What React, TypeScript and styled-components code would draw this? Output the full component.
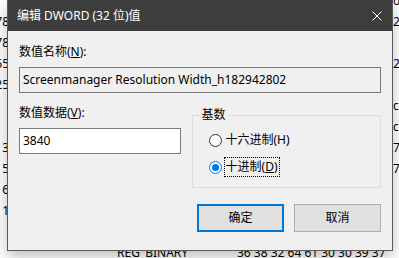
import React from "react";
import styled, { createGlobalStyle } from "styled-components";

const Global = createGlobalStyle`
  html, body { margin: 0; padding: 0; background: #fff; overflow: hidden; }
  body { font-family: "Noto Sans", "Noto Sans CJK SC", sans-serif; font-size: 12px; }
`;

const FONT = `"Noto Sans", "Noto Sans CJK SC", sans-serif`;

const Screen = styled.div`
  position: relative;
  width: 399px;
  height: 258px;
  overflow: hidden;
  background: #fff;
`;

const BgList = styled.div`
  margin-top: -10px;
  display: flex;
  flex-direction: column;
`;

const BgRow = styled.div`
  display: grid;
  grid-template-columns: 9px 108px 120px 156px 1fr;
  height: 21px;
  align-items: center;
  color: #000;
  white-space: nowrap;
  font-family: ${FONT};
  font-size: 12px;
`;

const BgCell = styled.span<{ $span?: number; $end?: boolean }>`
  overflow: hidden;
  display: flex;
  justify-content: ${(p) => (p.$end ? "flex-end" : "flex-start")};
  grid-column: span ${(p) => p.$span || 1};
`;

const Dialog = styled.div`
  position: absolute;
  left: 7px;
  top: 0;
  width: 386px;
  height: 251px;
  box-sizing: border-box;
  background: #f0f0f0;
  border: 1px solid #5a5a5a;
  border-top: none;
  box-shadow: 0 6px 14px rgba(0, 0, 0, 0.25);
  display: flex;
  flex-direction: column;
  font-family: ${FONT};
  font-size: 12px;
  color: #000;
`;

const TitleBar = styled.div`
  height: 31px;
  flex: none;
  background: #3d3d3d;
  color: #fff;
  display: flex;
  align-items: center;
  padding-left: 9px;
`;

const Title = styled.span`
  font-size: 12px;
  line-height: 16px;
`;

const CloseButton = styled.div`
  margin-left: auto;
  width: 31px;
  height: 31px;
  display: flex;
  align-items: center;
  justify-content: center;
`;

const Body = styled.div`
  display: flex;
  flex-direction: column;
  padding: 13px 11px 0 11px;
`;

const Label = styled.div`
  line-height: 16px;
  height: 16px;
  white-space: nowrap;
`;

const Key = styled.span`
  text-decoration: underline;
  text-underline-offset: 1px;
`;

const TextBox = styled.div<{ $readOnly?: boolean }>`
  margin-top: 7px;
  height: 26px;
  box-sizing: border-box;
  border: 1px solid #7a7a7a;
  background: ${(p) => (p.$readOnly ? "#f0f0f0" : "#fff")};
  padding: 0 3px;
  line-height: 24px;
  white-space: nowrap;
  overflow: hidden;
`;

const DataRow = styled.div`
  display: flex;
  gap: 11px;
  margin-top: 12px;
`;

const DataCol = styled.div`
  width: 162px;
  display: flex;
  flex-direction: column;
`;

const GroupBox = styled.div`
  position: relative;
  width: 190px;
  height: 73px;
  margin-top: 10px;
  box-sizing: border-box;
  border: 1px solid #dcdcdc;
  padding: 14px 0 0 16px;
  display: flex;
  flex-direction: column;
  gap: 7px;
`;

const Legend = styled.span`
  position: absolute;
  top: -9px;
  left: 7px;
  padding: 0 2px;
  background: #f0f0f0;
  line-height: 16px;
`;

const RadioRow = styled.div`
  display: flex;
  align-items: center;
  gap: 2px;
  height: 20px;
`;

const RadioCircle = styled.span<{ $checked?: boolean }>`
  width: 13px;
  height: 13px;
  box-sizing: border-box;
  border-radius: 50%;
  border: 1px solid ${(p) => (p.$checked ? "#0078d7" : "#333")};
  background: #fff;
  display: flex;
  align-items: center;
  justify-content: center;
  &::after {
    content: "";
    display: ${(p) => (p.$checked ? "block" : "none")};
    width: 7px;
    height: 7px;
    border-radius: 50%;
    background: #0078d7;
  }
`;

const RadioLabel = styled.span<{ $focused?: boolean }>`
  height: 20px;
  box-sizing: border-box;
  line-height: 18px;
  padding: 0 1px;
  border: 1px dotted ${(p) => (p.$focused ? "#000" : "transparent")};
  white-space: nowrap;
`;

const ButtonRow = styled.div`
  display: flex;
  justify-content: flex-end;
  gap: 10px;
  margin-top: 16px;
`;

const Button = styled.div<{ $primary?: boolean }>`
  width: 87px;
  height: 28px;
  box-sizing: border-box;
  background: #e1e1e1;
  border: ${(p) => (p.$primary ? "2px solid #0078d7" : "1px solid #adadad")};
  display: flex;
  align-items: center;
  justify-content: center;
  line-height: 16px;
`;

type Row = { left?: string; type?: string; data?: string; right?: string };

const rows: Row[] = [
  { right: "o" },
  { left: "78", right: "2" },
  { left: "78" },
  { left: "65", right: "2" },
  { left: "25" },
  { right: "c" },
  { right: "c" },
  { left: "13", right: "7" },
  { left: "15", right: "7" },
  { left: "16" },
  { left: "11" },
  {},
  { type: "REG_BINARY", data: "36 38 32 64 61 30 30 39 37" },
];

export default function App() {
  return (
    <>
      <Global />
      <Screen>
        <BgList>
          {rows.map((r, i) => (
            <BgRow key={i}>
              <BgCell $end>{r.left ?? ""}</BgCell>
              <BgCell />
              <BgCell>{r.type ?? ""}</BgCell>
              {r.data ? (
                <BgCell $span={2}>{r.data}</BgCell>
              ) : (
                <>
                  <BgCell />
                  <BgCell>{r.right ?? ""}</BgCell>
                </>
              )}
            </BgRow>
          ))}
        </BgList>

        <Dialog>
          <TitleBar>
            <Title>编辑 DWORD (32 位)值</Title>
            <CloseButton>
              <svg width="10" height="10" viewBox="0 0 10 10">
                <path d="M0.5 0.5 L9.5 9.5 M9.5 0.5 L0.5 9.5" stroke="#fff" strokeWidth="1" fill="none" />
              </svg>
            </CloseButton>
          </TitleBar>
          <Body>
            <Label>
              数值名称(<Key>N</Key>):
            </Label>
            <TextBox $readOnly>Screenmanager Resolution Width_h182942802</TextBox>
            <DataRow>
              <DataCol>
                <Label>
                  数值数据(<Key>V</Key>):
                </Label>
                <TextBox>3840</TextBox>
              </DataCol>
              <GroupBox>
                <Legend>基数</Legend>
                <RadioRow>
                  <RadioCircle />
                  <RadioLabel>十六进制(H)</RadioLabel>
                </RadioRow>
                <RadioRow>
                  <RadioCircle $checked />
                  <RadioLabel $focused>
                    十进制(<Key>D</Key>)
                  </RadioLabel>
                </RadioRow>
              </GroupBox>
            </DataRow>
            <ButtonRow>
              <Button $primary>确定</Button>
              <Button>取消</Button>
            </ButtonRow>
          </Body>
        </Dialog>
      </Screen>
    </>
  );
}
